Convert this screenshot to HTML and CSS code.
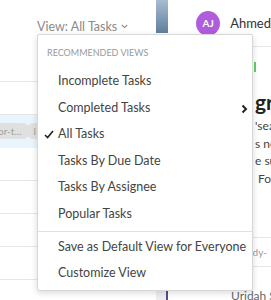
FILE: index.html
```html
<!DOCTYPE html>
<html>
<head>
  <title>Tasks</title>
  <link rel="stylesheet" href="styles.css">
</head>
<body>
  <div class="page">
    <!-- Task list -->
    <div class="list-pane">
      <div class="toolbar">
        <span class="view-toggle">View: All Tasks
          <svg class="caret" width="7" height="5" viewBox="0 0 7 5"><polyline points="0.8,1 3.5,3.6 6.2,1" fill="none" stroke="#8a8a8a" stroke-width="1.1"/></svg>
        </span>
      </div>
      <div class="row"></div>
      <div class="row row-active">
        <span class="tag">or-t...</span>
        <span class="tag">l</span>
      </div>
      <div class="row"></div>
      <div class="row"></div>
      <div class="row"></div>
      <div class="row"></div>
    </div>

    <!-- Splitter -->
    <div class="splitter">
      <div class="thumb"></div>
      <div class="handle"></div>
    </div>

    <!-- Task details -->
    <div class="detail-pane">
      <div class="detail-header">
        <span class="avatar">AJ</span>
        <span class="user-name">Ahmed</span>
      </div>
      <div class="detail-body">
        <div class="status-mark"></div>
        <h2 class="detail-title">gr</h2>
        <p class="detail-text">'sea<br>s ne<br>e su<br>&nbsp;Fo</p>
        <div class="field">udy-</div>
        <div class="assignee">Uridah S</div>
      </div>
    </div>
  </div>

  <!-- View menu -->
  <div class="menu">
    <div class="menu-header">RECOMMENDED VIEWS</div>
    <div class="menu-item">Incomplete Tasks</div>
    <div class="menu-item">Completed Tasks
      <svg class="submenu-arrow" width="7" height="10" viewBox="0 0 7 10"><polyline points="1.5,1.5 5,5 1.5,8.5" fill="none" stroke="#222" stroke-width="2"/></svg>
    </div>
    <div class="menu-item selected">
      <svg class="check" width="10" height="9" viewBox="0 0 10 9"><polyline points="1,5 3.6,7.6 9,1" fill="none" stroke="#222" stroke-width="1.6"/></svg>
      All Tasks
    </div>
    <div class="menu-item">Tasks By Due Date</div>
    <div class="menu-item">Tasks By Assignee</div>
    <div class="menu-item">Popular Tasks</div>
    <div class="menu-divider"></div>
    <div class="menu-item">Save as Default View for Everyone</div>
    <div class="menu-item">Customize View</div>
  </div>
</body>
</html>
```

FILE: styles.css
```css
/* Whole page */
body {
  margin: 0;
  font-family: Lato, "Open Sans", sans-serif;
  color: #333;
  width: 271px;
  height: 300px;
  overflow: hidden;
  background: #fff;
}

.page {
  display: flex;
  height: 300px;
}

/* Left list */
.list-pane {
  width: 156px;
  flex-shrink: 0;
}

.toolbar {
  height: 82px;
  border-bottom: 1px solid #e6e6e6;
  padding-left: 37px;
  padding-top: 15px;
  box-sizing: border-box;
}

.view-toggle {
  font-size: 12.5px;
  color: #8a8a8a;
  border-bottom: 1px dotted #999;
  padding-bottom: 1px;
  white-space: nowrap;
}

.caret {
  margin-left: 1px;
  vertical-align: 2px;
}

.row {
  height: 32px;
  border-bottom: 1px solid #e6e6e6;
  display: flex;
  align-items: center;
  gap: 6px;
}

.row-active {
  background: #e8f5fb;
  border-bottom-color: #e8f5fb;
}

.tag {
  background: #e0e0e0;
  color: #a0a0a0;
  font-size: 10px;
  border-radius: 8px;
  padding: 2px 8px;
  margin-left: -10px;
}

/* Splitter between panes */
.splitter {
  width: 12px;
  flex-shrink: 0;
  display: flex;
  flex-direction: column;
  justify-content: space-between;
}

.thumb {
  height: 33px;
  background: linear-gradient(to bottom, #a7bccf, #5f7f9e);
}

.handle {
  height: 9px;
  background: #eeeef2;
  border-right: 2px solid #5c4b8a;
  box-sizing: border-box;
}

/* Right detail pane */
.detail-pane {
  flex: 1;
  overflow: hidden;
}

.detail-header {
  height: 47px;
  border-bottom: 1px solid #e6e6e6;
  display: flex;
  align-items: center;
  padding-left: 28px;
  box-sizing: border-box;
  gap: 10px;
}

.avatar {
  width: 25px;
  height: 25px;
  border-radius: 50%;
  background: #b05cdc;
  color: #fff;
  font-size: 10px;
  font-weight: bold;
  display: flex;
  align-items: center;
  justify-content: center;
}

.user-name {
  font-size: 13px;
  color: #333;
  white-space: nowrap;
}

.detail-body {
  padding-left: 87px;
  white-space: nowrap;
}

.status-mark {
  width: 2px;
  height: 10px;
  background: #5ccf6a;
  margin-top: 15px;
  margin-left: -1px;
}

.detail-title {
  font-size: 21px;
  font-weight: bold;
  margin: 18px 0 0;
  line-height: 24px;
  color: #222;
}

.detail-text {
  font-size: 12px;
  line-height: 17.5px;
  margin: 3px 0 0;
  color: #444;
}

.field {
  margin-top: 50px;
  border-top: 1px solid #e6e6e6;
  border-bottom: 1px solid #e6e6e6;
  height: 28px;
  line-height: 28px;
  font-size: 10px;
  color: #999;
  margin-left: -8px;
}

.assignee {
  font-size: 12px;
  color: #666;
  margin-top: 21px;
  margin-left: -24px;
}

/* Drop-down menu over the page */
.menu {
  position: absolute;
  left: 37px;
  top: 34px;
  width: 216px;
  box-sizing: border-box;
  background: #fff;
  border: 1px solid #d8d8d8;
  border-radius: 2px;
  box-shadow: 0 2px 6px rgba(0, 0, 0, 0.15);
  padding-bottom: 3px;
}

.menu-header {
  font-size: 9px;
  color: #9a9a9a;
  line-height: 10px;
  padding: 13px 9px 10px;
}

.menu-item {
  position: relative;
  height: 26.6px;
  line-height: 26.6px;
  padding-left: 20px;
  font-size: 12.5px;
  color: #444;
  white-space: nowrap;
}

.check {
  position: absolute;
  left: 6px;
  top: 9px;
}

.submenu-arrow {
  position: absolute;
  left: 203px;
  top: 9px;
}

.menu-divider {
  border-top: 1px solid #e0e0e0;
  margin: 3px 0 2px;
}
```
